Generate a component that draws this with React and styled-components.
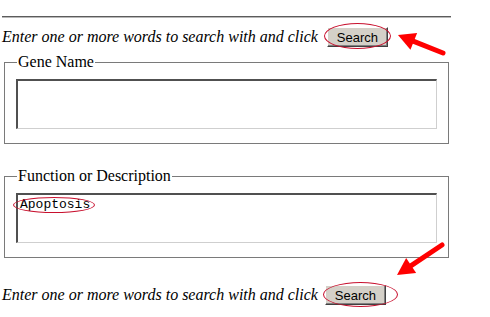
import React from "react";
import styled, { createGlobalStyle } from "styled-components";

const GlobalStyle = createGlobalStyle`
  html, body {
    margin: 0;
    padding: 0;
    background: #ffffff;
  }
  body {
    font-family: "Liberation Serif", "Times New Roman", serif;
    color: #000000;
  }
`;

// arrow head from tail -> tip
const arrowHead = (tail, tip, len = 17, half = 9) => {
  const dx = tip[0] - tail[0];
  const dy = tip[1] - tail[1];
  const d = Math.sqrt(dx * dx + dy * dy);
  const ux = dx / d;
  const uy = dy / d;
  const bx = tip[0] - ux * len;
  const by = tip[1] - uy * len;
  const nx = -uy;
  const ny = ux;
  return {
    base: [bx, by],
    points: `${tip[0]},${tip[1]} ${bx + nx * half},${by + ny * half} ${bx - nx * half},${by - ny * half}`
  };
};

const Arrow = ({ tail, tip }) => {
  const head = arrowHead(tail, tip);
  return (
    <g>
      <line
        x1={tail[0]}
        y1={tail[1]}
        x2={head.base[0]}
        y2={head.base[1]}
        stroke="#ff0000"
        strokeWidth="5"
        strokeLinecap="round"
      />
      <polygon points={head.points} fill="#ff0000" />
    </g>
  );
};

function App() {
  return (
    <Page>
      <GlobalStyle />
      <Rule />
      <SearchRow>
        <Hint>Enter one or more words to search with and click</Hint>
        <Marked $ml={9} $left={-3} $top={-4} $w={67} $h={26}>
          <SearchButton>Search</SearchButton>
        </Marked>
      </SearchRow>

      <Group>
        <Caption>Gene Name</Caption>
        <Field />
      </Group>

      <Group $mt={23}>
        <Caption>Function or Description</Caption>
        <FieldWrap>
          <Field defaultValue="Apoptosis" />
          <Circle $left={-3} $top={4} $w={82} $h={16} />
        </FieldWrap>
      </Group>

      <SearchRow $mt={24}>
        <Hint>Enter one or more words to search with and click</Hint>
        <Marked $ml={7} $left={-2} $top={-3} $w={75} $h={25}>
          <SearchButton>Search</SearchButton>
        </Marked>
      </SearchRow>
      <Rule $mt={10} />

      <Overlay width="490" height="317" viewBox="0 0 490 317">
        <Arrow tail={[443, 53]} tip={[398, 35]} />
        <Arrow tail={[442, 245]} tip={[397, 275]} />
      </Overlay>
    </Page>
  );
}

const Page = styled.div`
  position: relative;
  width: 451px;
  height: 317px;
  padding-left: 2px;
  overflow: hidden;
`;

const Rule = styled.hr`
  margin: ${p => (p.$mt !== undefined ? p.$mt : 16)}px 0 0 0;
  width: 449px;
  height: 0;
  border: none;
  border-top: 1px solid #5c5c5c;
  border-bottom: 1px solid #b8b8b8;
`;

const SearchRow = styled.div`
  display: flex;
  align-items: center;
  height: 26px;
  margin-top: ${p => (p.$mt !== undefined ? p.$mt : 6)}px;
`;

const Hint = styled.span`
  font-family: "Liberation Serif", "Times New Roman", serif;
  font-style: italic;
  font-size: 16px;
  line-height: 18px;
  white-space: nowrap;
`;

const Marked = styled.span`
  position: relative;
  display: inline-flex;
  margin-left: ${p => p.$ml}px;

  &::after {
    content: "";
    position: absolute;
    left: ${p => p.$left}px;
    top: ${p => p.$top}px;
    width: ${p => p.$w}px;
    height: ${p => p.$h}px;
    border: 1px solid #c8102e;
    border-radius: 50%;
    box-sizing: border-box;
    pointer-events: none;
  }
`;

const SearchButton = styled.button`
  width: 61px;
  height: 20px;
  padding: 0;
  background: #d4d0c8;
  border: 1px solid;
  border-color: #ffffff #404040 #404040 #ffffff;
  box-shadow: inset -1px -1px 0 #808080;
  font-family: "Liberation Sans", Arial, sans-serif;
  font-size: 13px;
  color: #000000;
`;

const Group = styled.fieldset`
  margin: ${p => (p.$mt !== undefined ? p.$mt : 3)}px 0 0 2px;
  width: 445px;
  box-sizing: border-box;
  padding: 8px 11px 14px 11px;
  border: 1px solid #7a7a7a;
  box-shadow: inset 1px 1px 0 #ffffff;
`;

const Caption = styled.legend`
  margin-left: 1px;
  padding: 0 1px;
  font-family: "Liberation Serif", "Times New Roman", serif;
  font-size: 16px;
  line-height: 18px;
`;

const FieldWrap = styled.div`
  position: relative;
`;

const Circle = styled.div`
  position: absolute;
  left: ${p => p.$left}px;
  top: ${p => p.$top}px;
  width: ${p => p.$w}px;
  height: ${p => p.$h}px;
  border: 1px solid #c8102e;
  border-radius: 50%;
  box-sizing: border-box;
  pointer-events: none;
`;

const Field = styled.textarea`
  display: block;
  width: 421px;
  height: 50px;
  box-sizing: border-box;
  margin: 0;
  padding: 2px;
  resize: none;
  background: #ffffff;
  border-style: solid;
  border-width: 2px 1px 1px 2px;
  border-color: #505050 #cfcfcf #cfcfcf #505050;
  font-family: "Liberation Mono", "Courier New", monospace;
  font-size: 13px;
  line-height: 15px;
  color: #000000;
  outline: none;
`;

const Overlay = styled.svg`
  position: absolute;
  left: 0;
  top: 0;
  pointer-events: none;
`;

export default App;
